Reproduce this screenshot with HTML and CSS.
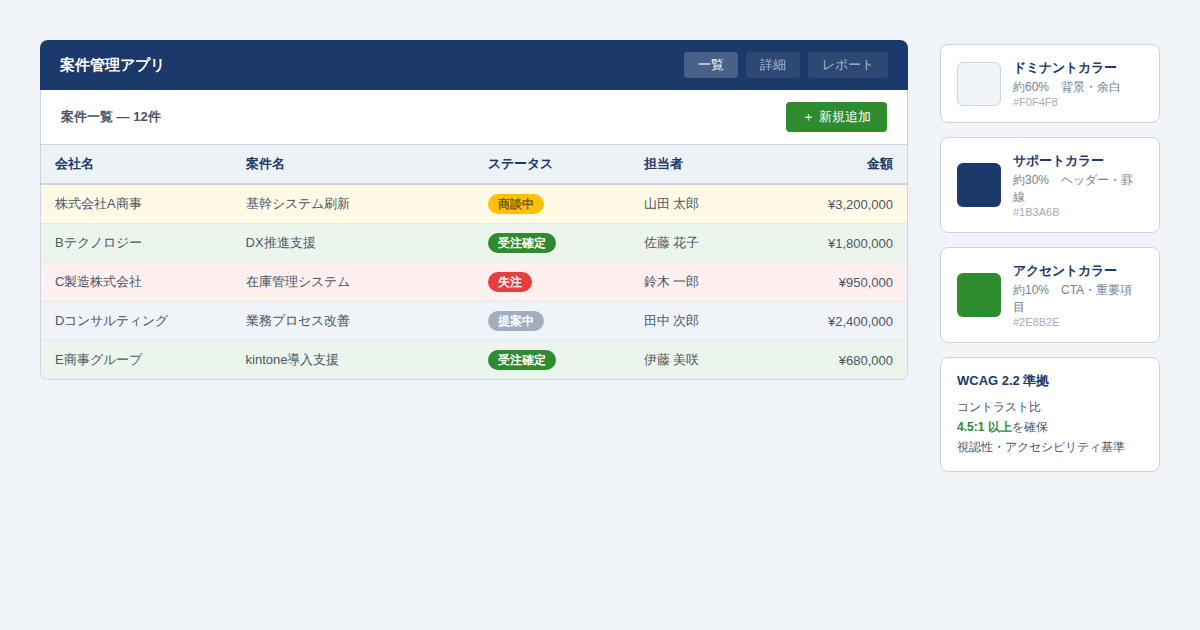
FILE: index.html
```html
<!DOCTYPE html>
<html lang="ja">
<head>
<meta charset="UTF-8">
<meta name="viewport" content="width=device-width, initial-scale=1">
<title>案件管理アプリ</title>
<link rel="stylesheet" href="styles.css">
</head>
<body>
<div class="page">
  <main class="app">
    <header class="app-header">
      <h1 class="app-title">案件管理アプリ</h1>
      <nav class="tabs">
        <button type="button" class="tab tab-active">一覧</button>
        <button type="button" class="tab">詳細</button>
        <button type="button" class="tab">レポート</button>
      </nav>
    </header>
    <section class="app-body">
      <div class="toolbar">
        <h2 class="toolbar-title">案件一覧 — 12件</h2>
        <button type="button" class="add-button">＋ 新規追加</button>
      </div>
      <table class="deals">
        <thead>
          <tr>
            <th class="col-company">会社名</th>
            <th class="col-deal">案件名</th>
            <th class="col-status">ステータス</th>
            <th class="col-owner">担当者</th>
            <th class="amount">金額</th>
          </tr>
        </thead>
        <tbody>
          <tr class="row-negotiating"><td>株式会社A商事</td><td>基幹システム刷新</td><td><span class="badge badge-negotiating">商談中</span></td><td>山田 太郎</td><td class="amount">¥3,200,000</td></tr>
          <tr class="row-won"><td>Bテクノロジー</td><td>DX推進支援</td><td><span class="badge badge-won">受注確定</span></td><td>佐藤 花子</td><td class="amount">¥1,800,000</td></tr>
          <tr class="row-lost"><td>C製造株式会社</td><td>在庫管理システム</td><td><span class="badge badge-lost">失注</span></td><td>鈴木 一郎</td><td class="amount">¥950,000</td></tr>
          <tr class="row-proposed"><td>Dコンサルティング</td><td>業務プロセス改善</td><td><span class="badge badge-proposed">提案中</span></td><td>田中 次郎</td><td class="amount">¥2,400,000</td></tr>
          <tr class="row-won"><td>E商事グループ</td><td>kintone導入支援</td><td><span class="badge badge-won">受注確定</span></td><td>伊藤 美咲</td><td class="amount">¥680,000</td></tr>
        </tbody>
      </table>
    </section>
  </main>
  <aside class="sidebar">
    <section class="card color-card">
      <div class="swatch swatch-dominant"></div>
      <div class="card-text">
        <h3 class="card-title">ドミナントカラー</h3>
        <p class="card-desc">約60%　背景・余白</p>
        <p class="card-code">#F0F4F8</p>
      </div>
    </section>
    <section class="card color-card">
      <div class="swatch swatch-support"></div>
      <div class="card-text">
        <h3 class="card-title">サポートカラー</h3>
        <p class="card-desc">約30%　ヘッダー・罫線</p>
        <p class="card-code">#1B3A6B</p>
      </div>
    </section>
    <section class="card color-card">
      <div class="swatch swatch-accent"></div>
      <div class="card-text">
        <h3 class="card-title">アクセントカラー</h3>
        <p class="card-desc">約10%　CTA・重要項目</p>
        <p class="card-code">#2E8B2E</p>
      </div>
    </section>
    <section class="card note-card">
      <h3 class="card-title">WCAG 2.2 準拠</h3>
      <p class="note">コントラスト比<br><strong class="note-strong">4.5:1 以上</strong>を確保<br>視認性・アクセシビリティ基準</p>
    </section>
  </aside>
</div>
</body>
</html>
```
FILE: styles.css
```css
* { box-sizing: border-box; }

body {
  margin: 0;
  background: #f0f4f8;
  color: #4a5568;
  font-family: "Liberation Sans", sans-serif;
  font-size: 13px;
}

h1, h2, h3, p { margin: 0; }

button {
  border: 0;
  border-radius: 4px;
  font: inherit;
  cursor: pointer;
}

.page {
  display: flex;
  align-items: flex-start;
  gap: 32px;
  padding: 40px;
}

.app { flex: 1; min-width: 0; }

.app-header {
  display: flex;
  align-items: center;
  justify-content: space-between;
  padding: 12px 20px;
  background: #1b3a6b;
  border-radius: 8px 8px 0 0;
}

.app-title {
  color: #fff;
  font-size: 15px;
  line-height: 22px;
}

.tabs { display: flex; gap: 8px; }

.tab {
  padding: 3px 14px;
  background: rgba(255, 255, 255, 0.08);
  color: rgba(255, 255, 255, 0.6);
  line-height: 20px;
}

.tab-active {
  background: rgba(255, 255, 255, 0.2);
  color: #fff;
}

.app-body {
  overflow: hidden;
  background: #fff;
  border: 1px solid #cbd5e0;
  border-top: 0;
  border-radius: 0 0 8px 8px;
}

.toolbar {
  display: flex;
  align-items: center;
  justify-content: space-between;
  padding: 12px 20px;
  border-bottom: 1px solid #cbd5e0;
}

.toolbar-title { font-size: 13px; line-height: 20px; }

.add-button {
  padding: 5px 16px;
  background: #2e8b2e;
  color: #fff;
  line-height: 20px;
}

.deals {
  width: 100%;
  table-layout: fixed;
  border-collapse: separate;
  border-spacing: 0;
}

.deals th,
.deals td {
  padding: 9px 14px;
  line-height: 20px;
  text-align: left;
}

.deals th {
  background: #edf2f7;
  border-bottom: 2px solid #cbd5e0;
  color: #1b3a6b;
}

.deals td { border-bottom: 1px solid #e2e8f0; }
.deals tr:last-child td { border-bottom: 0; }

.col-company { width: 22%; }
.col-deal { width: 28%; }
.col-status { width: 18%; }
.col-owner { width: 16%; }

.deals .amount { text-align: right; }
.deals td.amount { padding-top: 10px; padding-bottom: 8px; }

.row-negotiating { background: #fff9e6; }
.row-won { background: #ebf5eb; }
.row-lost { background: #fff0f0; }
.row-proposed { background: #f0f4f8; }

.badge {
  display: block;
  width: fit-content;
  padding: 0 10px;
  border-radius: 10px;
  color: #fff;
  font-size: 12px;
  font-weight: bold;
  line-height: 20px;
}

.badge-negotiating { background: #ffc107; color: #7a5c00; }
.badge-won { background: #2e8b2e; }
.badge-lost { background: #e53e3e; }
.badge-proposed { background: #a0aec0; }

.sidebar {
  display: flex;
  flex-direction: column;
  flex: 0 0 220px;
  gap: 14px;
  padding-top: 4px;
}

.card {
  padding: 14px 16px;
  background: #fff;
  border: 1px solid #cbd5e0;
  border-radius: 8px;
}

.color-card {
  display: flex;
  align-items: center;
  gap: 12px;
}

.swatch {
  flex: none;
  width: 44px;
  height: 44px;
  border-radius: 6px;
}

.swatch-dominant { background: #f0f4f8; border: 1px solid #cbd5e0; }
.swatch-support { background: #1b3a6b; }
.swatch-accent { background: #2e8b2e; }

.card-title {
  margin-bottom: 3px;
  color: #1b3a6b;
  font-size: 13px;
  line-height: 17px;
}

.card-desc {
  color: #718096;
  font-size: 12px;
  line-height: 17px;
}

.card-code {
  color: #a0aec0;
  font-size: 11px;
  line-height: 12px;
}

.note {
  margin-top: 8px;
  font-size: 12px;
  line-height: 20px;
}

.note-strong { color: #2e8b2e; }
```
